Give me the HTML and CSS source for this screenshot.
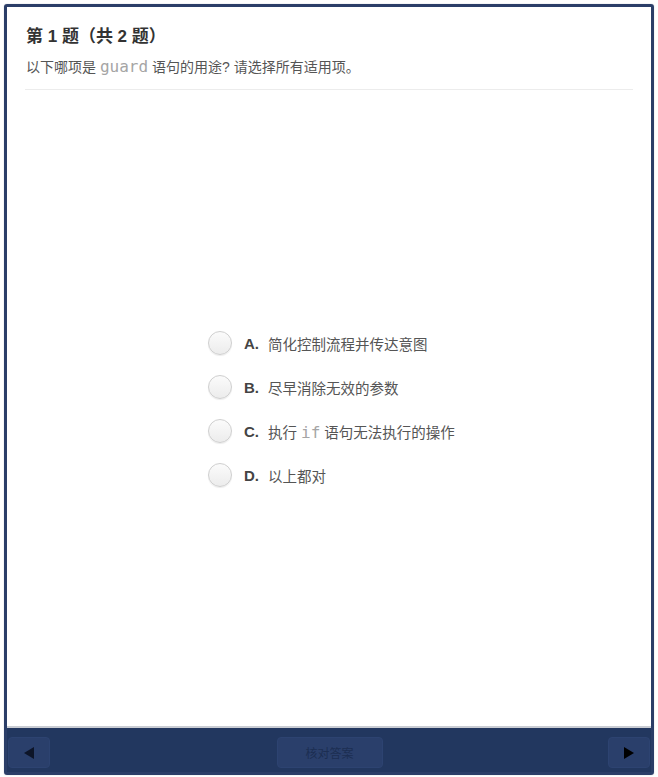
FILE: index.html
```html
<!DOCTYPE html>
<html lang="zh">
<head>
<meta charset="utf-8">
<link rel="stylesheet" href="styles.css">
</head>
<body>
<div class="frame">
  <div class="content">
    <div class="header">
      <div class="title">第 1 题（共 2 题）</div>
      <div class="prompt">以下哪项是 <code>guard</code> 语句的用途? 请选择所有适用项。</div>
    </div>
    <div class="options">
      <div class="option"><span class="radio"></span><span class="letter">A.</span><span class="text">简化控制流程并传达意图</span></div>
      <div class="option"><span class="radio"></span><span class="letter">B.</span><span class="text">尽早消除无效的参数</span></div>
      <div class="option"><span class="radio"></span><span class="letter">C.</span><span class="text">执行 <code>if</code> 语句无法执行的操作</span></div>
      <div class="option"><span class="radio"></span><span class="letter">D.</span><span class="text">以上都对</span></div>
    </div>
  </div>
  <div class="footer">
    <div class="btn nav"><span class="tri-left"></span></div>
    <div class="btn check">核对答案</div>
    <div class="btn nav"><span class="tri-right"></span></div>
  </div>
</div>
</body>
</html>
```
FILE: styles.css
```css
* { box-sizing: border-box; }
html, body { margin: 0; padding: 0; background: #fff; }
body {
  font-family: "Liberation Sans", "Noto Sans CJK SC", sans-serif;
  width: 658px;
  height: 777px;
  overflow: hidden;
}
.frame {
  margin: 4px 0 0 4px;
  width: 650px;
  height: 771px;
  border: 3px solid #2b3e68;
  border-radius: 3px;
  display: flex;
  flex-direction: column;
  box-shadow: 0 0 1px rgba(40,60,100,0.5);
}
.content {
  flex: 1;
  background: #fff;
  display: flex;
  flex-direction: column;
  border-bottom: 2px solid #c9ccd3;
}
.header {
  margin: 0 18px;
  padding: 18px 1px 12px;
  border-bottom: 1px solid #ececec;
}
.title {
  font-size: 17px;
  font-weight: bold;
  color: #333;
  line-height: 24px;
}
.prompt {
  margin-top: 8px;
  font-size: 14px;
  color: #555;
  line-height: 20px;
}
code {
  font-family: "DejaVu Sans Mono", "Liberation Mono", monospace;
  font-size: 16px;
  color: #a5a5a5;
}
.options {
  flex: 1;
  display: flex;
  flex-direction: column;
  justify-content: center;
  align-items: flex-start;
  padding-left: 201px;
  padding-top: 2px;
}
.option {
  display: flex;
  align-items: center;
  height: 44px;
}
.radio {
  width: 24px;
  height: 24px;
  border-radius: 50%;
  border: 1px solid #cfcfcf;
  background: linear-gradient(#fbfbfb, #ececec);
  box-shadow: 0 1px 1px rgba(0,0,0,0.08);
  margin-right: 12px;
}
.letter {
  font-size: 15px;
  font-weight: bold;
  color: #444;
  width: 24px;
}
.text {
  font-size: 14.5px;
  color: #555;
}
.text code { font-size: 16px; }
.footer {
  height: 44px;
  background: #22375f;
  display: flex;
  justify-content: space-between;
  align-items: flex-start;
  padding: 9px 1px 0;
}
.btn {
  height: 31px;
  border-radius: 4px;
  background: #2a3f6b;
  border: 1px solid #2d4371;
  display: flex;
  align-items: center;
  justify-content: center;
}
.nav { width: 42px; }
.check {
  width: 106px;
  font-size: 12px;
  color: #1c2e52;
  margin-left: 1px;
}
.tri-left {
  width: 0; height: 0;
  border-top: 6px solid transparent;
  border-bottom: 6px solid transparent;
  border-right: 10px solid #0d1528;
}
.tri-right {
  width: 0; height: 0;
  border-top: 6px solid transparent;
  border-bottom: 6px solid transparent;
  border-left: 10px solid #000;
}
```
